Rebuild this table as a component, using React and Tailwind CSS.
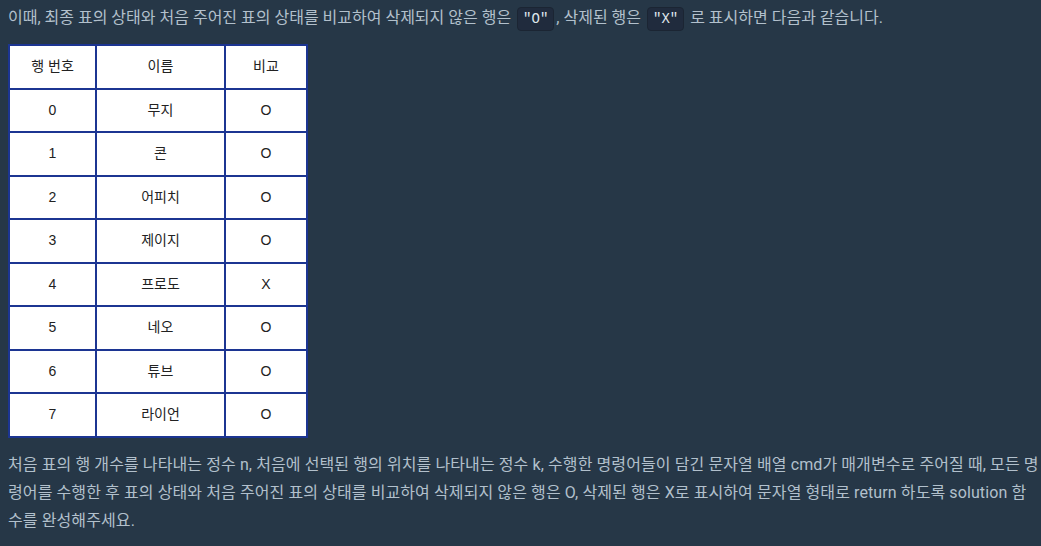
import React from 'react';

const rows = [
  ['0', '무지', 'O'],
  ['1', '콘', 'O'],
  ['2', '어피치', 'O'],
  ['3', '제이지', 'O'],
  ['4', '프로도', 'X'],
  ['5', '네오', 'O'],
  ['6', '튜브', 'O'],
  ['7', '라이언', 'O'],
];

const Code = ({ children }) => (
  <code className="mx-[2px] inline-block rounded-[4px] border border-[#1b2533] bg-[#202b3d] px-[5px] leading-[22px] text-[14px] tracking-normal text-[#dfe6ec] font-['Liberation_Mono',monospace]">
    {children}
  </code>
);

const cell = 'border-2 border-[#1c3592] text-center align-middle h-[43.5px]';

const App = () => {
  return (
    <div className="min-h-[546px] w-full bg-[#263747] pl-2 pr-[2px] text-[16px] tracking-[0.1px] text-[#b2c0cc] font-['Roboto','Noto_Sans_CJK_KR',sans-serif]">
      <p className="pt-[4px] leading-[28px] tracking-normal">
        이때, 최종 표의 상태와 처음 주어진 표의 상태를 비교하여 삭제되지 않은 행은 <Code>"O"</Code>, 삭제된 행은 <Code>"X"</Code> 로 표시하면 다음과 같습니다.
      </p>

      <table className="mt-[12px] border-collapse bg-white text-[14px] tracking-normal text-[#222] font-['Liberation_Sans','Noto_Sans_CJK_KR',sans-serif]">
        <thead>
          <tr>
            <th className={`${cell} w-[87px] font-normal`}>행 번호</th>
            <th className={`${cell} w-[129px] font-normal`}>이름</th>
            <th className={`${cell} w-[82px] font-normal`}>비교</th>
          </tr>
        </thead>
        <tbody>
          {rows.map((r) => (
            <tr key={r[0]}>
              <td className={cell}>{r[0]}</td>
              <td className={cell}>{r[1]}</td>
              <td className={cell}>{r[2]}</td>
            </tr>
          ))}
        </tbody>
      </table>

      <p className="mt-[13px] leading-[28px]">
        처음 표의 행 개수를 나타내는 정수 n, 처음에 선택된 행의 위치를 나타내는 정수 k, 수행한 명령어들이 담긴 문자열 배열 cmd가 매개변수로 주어질 때, 모든 명령어를 수행한 후 표의 상태와 처음 주어진 표의 상태를 비교하여 삭제되지 않은 행은 O, 삭제된 행은 X로 표시하여 문자열 형태로 return 하도록 solution 함수를 완성해주세요.
      </p>
    </div>
  );
};

export default App;
